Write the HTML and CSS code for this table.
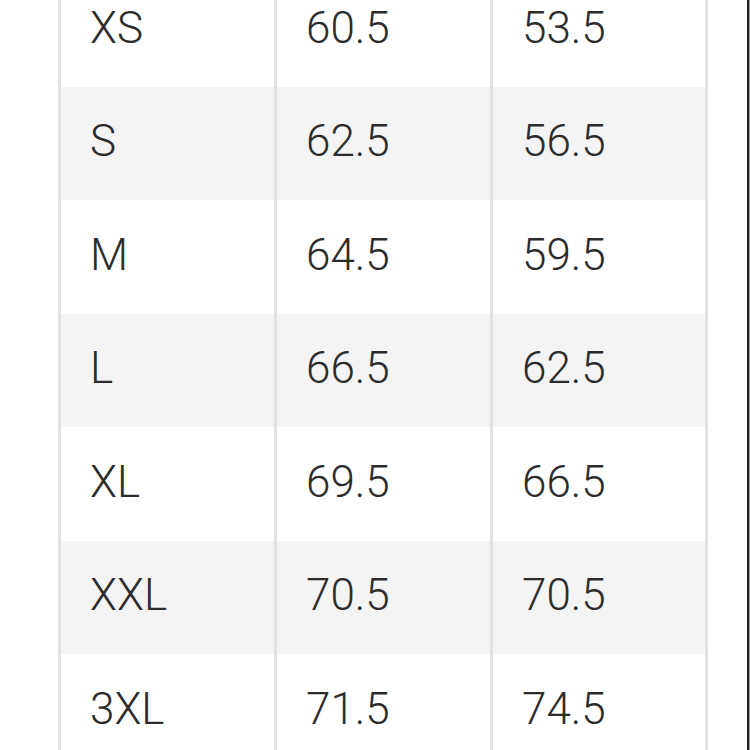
FILE: index.html
```html
<!DOCTYPE html>
<html>
<head>
<meta charset="utf-8">
<link rel="stylesheet" href="styles.css">
</head>
<body>
<div class="frame">
  <table class="chart">
    <colgroup>
      <col class="c1"><col class="c2"><col class="c3">
    </colgroup>
    <tbody>
      <tr><td>XS</td><td>60.5</td><td>53.5</td></tr>
      <tr class="alt"><td>S</td><td>62.5</td><td>56.5</td></tr>
      <tr><td>M</td><td>64.5</td><td>59.5</td></tr>
      <tr class="alt"><td>L</td><td>66.5</td><td>62.5</td></tr>
      <tr><td>XL</td><td>69.5</td><td>66.5</td></tr>
      <tr class="alt"><td>XXL</td><td>70.5</td><td>70.5</td></tr>
      <tr><td>3XL</td><td>71.5</td><td>74.5</td></tr>
    </tbody>
  </table>
</div>
</body>
</html>
```
FILE: styles.css
```css
html, body {
  margin: 0;
  padding: 0;
  background: #ffffff;
}
.frame {
  width: 747px;
  height: 750px;
  overflow: hidden;
  border-right: 2px solid #1f1f1f;
  box-shadow: 1px 0 0 #9a9a9a;
  background: #ffffff;
}
.chart {
  margin-top: -27px;
  margin-left: 58px;
  border-collapse: collapse;
  table-layout: fixed;
  width: 650px;
  font-family: Roboto, "Liberation Sans", sans-serif;
  font-size: 44px;
  font-weight: 300;
  color: #2c2c2c;
}
.c1 { width: 216px; }
.c2 { width: 216px; }
.c3 { width: 215px; }
.chart td {
  height: 113.5px;
  padding: 0 0 4px 29px;
  box-sizing: border-box;
  border-left: 3px solid #e2e2e2;
  border-right: 3px solid #e2e2e2;
  vertical-align: middle;
  line-height: 1;
  white-space: nowrap;
}
.chart tr.alt td {
  background: #f4f4f4;
}
```
